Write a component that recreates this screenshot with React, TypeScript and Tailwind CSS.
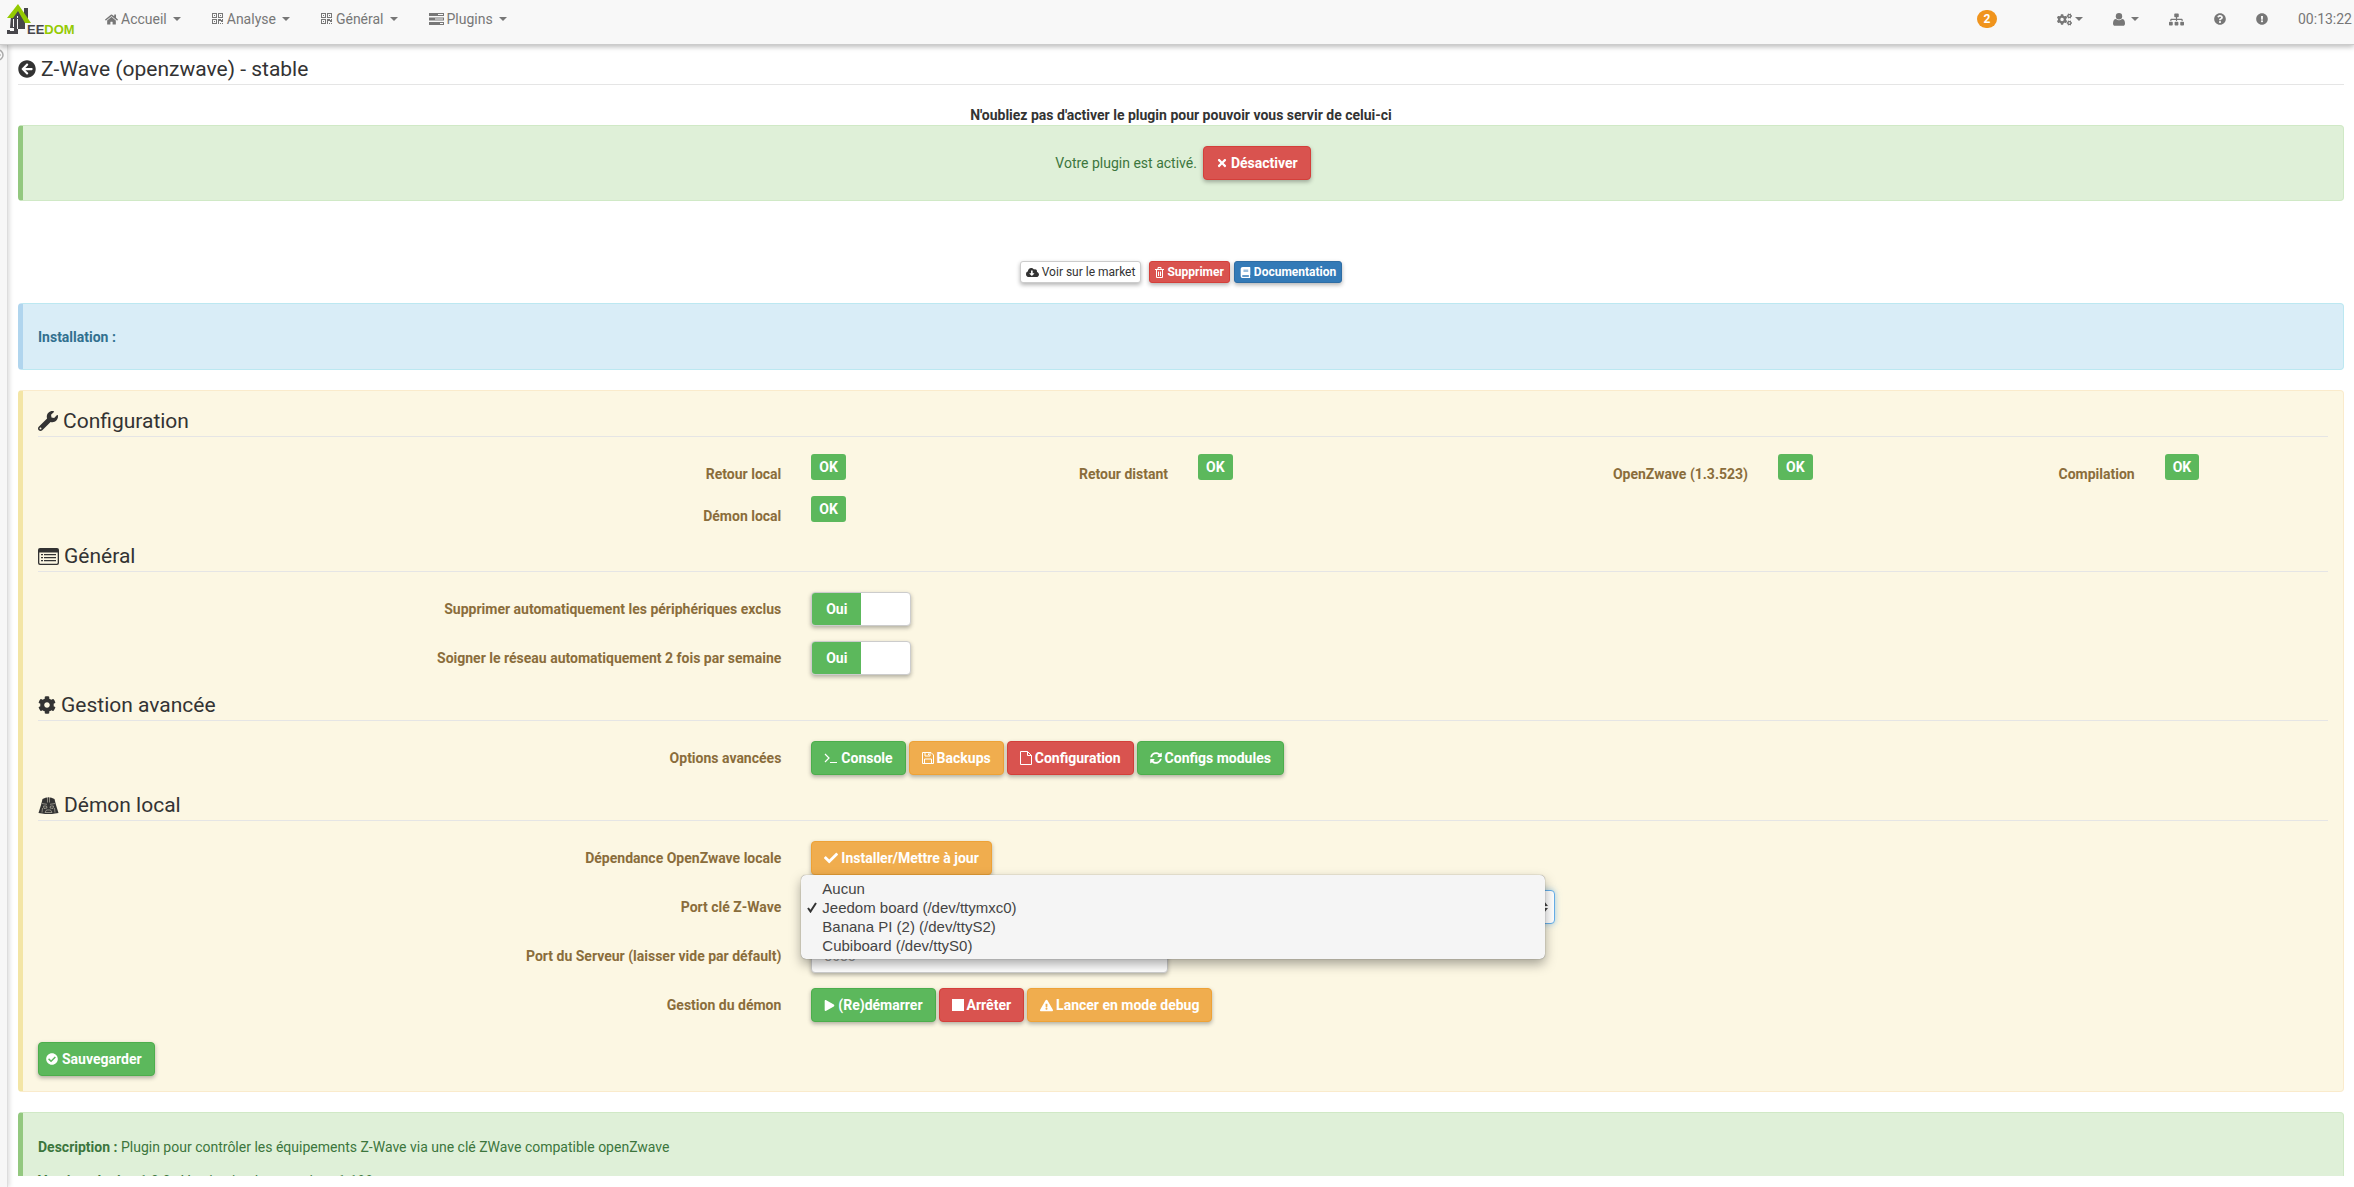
import { useState } from 'react';
import type { ReactNode } from 'react';
import {
  FaArrowCircleLeft,
  FaBook,
  FaCheck,
  FaCheckCircle,
  FaCloudDownloadAlt,
  FaCog,
  FaCogs,
  FaExclamationCircle,
  FaExclamationTriangle,
  FaHome,
  FaPlay,
  FaQuestionCircle,
  FaSitemap,
  FaSquareFull,
  FaSyncAlt,
  FaTimes,
  FaWrench,
} from 'react-icons/fa';

type Tone = 'default' | 'success' | 'warning' | 'danger' | 'primary';
type Size = 'normal' | 'small' | 'save';

const buttonTones: Record<Tone, string> = {
  default: 'bg-white border-[#cccccc] text-[#333333] font-normal',
  success: 'bg-[#5cb85c] border-[#4cae4c] text-white font-bold',
  warning: 'bg-[#f0ad4e] border-[#eea236] text-white font-bold',
  danger: 'bg-[#d9534f] border-[#d43f3a] text-white font-bold',
  primary: 'bg-[#337ab7] border-[#2e6da4] text-white font-bold',
};

const buttonSizes: Record<Size, string> = {
  normal: 'h-[34px] gap-[3px] rounded-[4px] px-3 text-sm',
  small: 'h-[22px] gap-[3px] rounded-[3px] px-[5px] text-xs',
  save: 'h-[34px] gap-1 rounded-[4px] pr-3 pl-[7px] text-sm',
};

const ports = [
  'Aucun',
  'Jeedom board (/dev/ttymxc0)',
  'Banana PI (2) (/dev/ttyS2)',
  'Cubiboard (/dev/ttyS0)',
];

function Logo() {
  return (
    <svg width="70" height="32" viewBox="0 0 70 32" role="img" aria-label="Jeedom">
      <path d="M17 4h4v12h-4z" fill="#47464b" />
      <path d="M4 12l7-6 7 8v11h-7v5H0v-4h3v1h4v-3H3z" fill="#47464b" />
      <path d="M6 15h1v8H6zM10 12h1v2h-1zM10 15h1v10h-1z" fill="#f8f8f8" />
      <path d="M0 14L11 0l13 19h-6L11 7 6 14z" fill="#94ca02" />
      <text x="20" y="30" fontFamily="Liberation Sans, sans-serif" fontSize="13" fontWeight="bold" fill="#47464b">
        EE<tspan fill="#94ca02">DOM</tspan>
      </text>
    </svg>
  );
}

function Caret() {
  return (
    <svg width="8" height="4" viewBox="0 0 8 4" fill="currentColor" aria-hidden="true">
      <path d="M0 0h8L4 4z" />
    </svg>
  );
}

function QrIcon() {
  return (
    <svg width="12" height="12" viewBox="0 0 12 12" fill="currentColor" fillRule="evenodd" aria-hidden="true">
      <path d="M0 0h5v5H0zM1 1v3h3V1zM6 0h5v5H6zM7 1v3h3V1zM0 6h5v5H0zM1 7v3h3V7zM2 2h1v1H2zM8 2h1v1H8zM2 8h1v1H2zM6 6h3v1h1V6h1v3H9V8H7v3H6zM8 10h1v1H8zM10 10h1v1h-1z" />
    </svg>
  );
}

function TasksIcon() {
  return (
    <svg width="15" height="12" viewBox="0 0 15 12" aria-hidden="true">
      <path d="M0 0h15v3H0zM0 4.500h15v3H0zM0 9h15v3H0z" fill="currentColor" />
      <path d="M9 1h5v1H9zM6 5.500h8v1H6zM11 10h3v1h-3z" fill="#f8f8f8" />
    </svg>
  );
}

function UserIcon() {
  return (
    <svg width="12" height="13" viewBox="0 0 12 13" fill="currentColor" aria-hidden="true">
      <circle cx="6" cy="3.300" r="3.200" />
      <path d="M3 6a4.500 4.500 0 0 0 6 0c2 0 3 2 3 4.500 0 1.500-.8 2.300-2 2.300H2c-1.200 0-2-.8-2-2.300C0 8 1 6 3 6z" />
    </svg>
  );
}

function ListIcon() {
  return (
    <svg width="21" height="17" viewBox="0 0 21 17" aria-hidden="true">
      <path
        d="M2 0h17a2 2 0 0 1 2 2v13a2 2 0 0 1-2 2H2a2 2 0 0 1-2-2V2a2 2 0 0 1 2-2zM1.300 4.500V15l.7.700h17l.7-.7V4.500z"
        fill="currentColor"
        fillRule="evenodd"
      />
      <path d="M3 6h2v1.300H3zM6 6h12v1.300H6zM3 9h2v1.300H3zM6 9h12v1.300H6zM3 12h2v1.300H3zM6 12h12v1.300H6z" fill="currentColor" />
    </svg>
  );
}

function HelmetIcon() {
  return (
    <svg width="21" height="17" viewBox="0 0 21 17" aria-hidden="true">
      <path d="M4.500 2Q10.500-1.500 16.500 2L18 8l2.500 8-3.500.5-3 .5H7l-3-.5-3.500-.5L3 8z" fill="currentColor" />
      <path
        d="M9.500 0v5.500M11.500 0v5.500M4 6.500l5 .8M17 6.500l-5 .8M5.500 9h3l.5 2-3 .5zM15.500 9h-3l-.5 2 3 .5zM8.500 13h4l1.500 2.500H7zM4.500 11l-.5 4.500M16.500 11l.5 4.500"
        fill="none"
        stroke="#fcf7e3"
        strokeWidth=".45"
      />
    </svg>
  );
}

function TerminalIcon() {
  return (
    <svg width="14" height="14" viewBox="0 0 14 14" fill="none" stroke="currentColor" aria-hidden="true">
      <path d="M1 3l4 4-4 4M6 11.500h7" strokeWidth="1.200" />
    </svg>
  );
}

function FloppyIcon() {
  return (
    <svg width="12" height="12" viewBox="0 0 12 12" fill="none" stroke="currentColor" aria-hidden="true">
      <path d="M.5.500h8.500l2.500 2.500v8.500H.5zM3 .5v3.500h5V.5M2.500 11.500V7h7v4.500M6.500 1.500v1.500" />
    </svg>
  );
}

function FileIcon() {
  return (
    <svg width="12" height="14" viewBox="0 0 12 14" fill="none" stroke="currentColor" aria-hidden="true">
      <path d="M.5.500h7L11.500 4.500v9H.5zM7.500.500v4h4" />
    </svg>
  );
}

function TrashIcon() {
  return (
    <svg width="9" height="11" viewBox="0 0 9 11" fill="none" stroke="currentColor" aria-hidden="true">
      <path d="M0 2.500h9M3 2V.5h3V2M1.500 3v7.500h6V3M3.500 4.500v4.500M5.500 4.500v4.500" />
    </svg>
  );
}

interface ButtonProps {
  tone: Tone;
  size?: Size;
  icon: ReactNode;
  children: ReactNode;
}

function Button({ tone, size = 'normal', icon, children }: ButtonProps) {
  return (
    <button
      type="button"
      className={`inline-flex items-center border whitespace-nowrap shadow-[0_2px_4px_rgba(0,0,0,0.3)] ${buttonSizes[size]} ${buttonTones[tone]}`}
    >
      {icon}
      {children}
    </button>
  );
}

function Legend({ icon, children }: { icon: ReactNode; children: ReactNode }) {
  return (
    <h2 className="flex h-[31px] items-center gap-[5px] border-b border-[#e5e5e5] text-[21px] leading-[30px] text-[#333333]">
      {icon}
      {children}
    </h2>
  );
}

function Status({ label, span }: { label: string; span: string }) {
  return (
    <>
      <div className={`${span} px-[15px] pt-[10px] text-right font-bold whitespace-nowrap`}>{label}</div>
      <div className="col-span-1 px-[15px]">
        <span className="inline-flex h-[26px] items-center rounded-[3px] bg-[#5cb85c] px-2 align-top font-bold text-white">
          OK
        </span>
      </div>
    </>
  );
}

interface RowProps {
  label: string;
  htmlFor?: string;
  span?: string;
  children: ReactNode;
}

function Row({ label, htmlFor, span = 'col-span-8', children }: RowProps) {
  return (
    <div className="-mx-[15px] grid grid-cols-12">
      <div className="col-span-4 px-[15px] pt-[7px] text-right font-bold">
        {htmlFor ? <label htmlFor={htmlFor}>{label}</label> : label}
      </div>
      <div className={`${span} relative flex h-[34px] gap-[3px] px-[15px]`}>{children}</div>
    </div>
  );
}

function Toggle({ id }: { id: string }) {
  const [checked, setChecked] = useState(true);

  return (
    <label className="flex h-[34px] w-[100px] overflow-hidden rounded-[4px] border border-[#cccccc] bg-white font-bold text-white shadow-[0_2px_4px_rgba(0,0,0,0.3)]">
      <input
        id={id}
        type="checkbox"
        className="sr-only"
        checked={checked}
        onChange={(e) => setChecked(e.target.checked)}
      />
      {checked ? (
        <span className="flex w-1/2 items-center justify-center bg-[#5cb85c]">Oui</span>
      ) : (
        <span className="ml-auto flex w-1/2 items-center justify-center bg-[#d9534f]">Non</span>
      )}
    </label>
  );
}

function NavItem({ icon, children }: { icon: ReactNode; children: ReactNode }) {
  return (
    <a href="#" className="flex items-center gap-[3px]">
      {icon}
      {children}
      <span className="ml-[3px]">
        <Caret />
      </span>
    </a>
  );
}

export default function App() {
  const [port, setPort] = useState(ports[1]);

  return (
    <div className="flex h-screen flex-col overflow-hidden bg-white font-[Roboto,sans-serif] text-sm leading-5 text-[#333333]">
      <header className="z-10 flex h-[45px] shrink-0 items-start border-b border-[#cccccc] bg-[#f8f8f8] pl-[7px] text-[#777777] shadow-[0_2px_5px_rgba(0,0,0,0.26)]">
        <a href="#" className="mt-1 mr-7">
          <Logo />
        </a>
        <nav className="flex h-[38px] items-center gap-[31px]">
          <NavItem icon={<FaHome size={13} />}>Accueil</NavItem>
          <NavItem icon={<QrIcon />}>Analyse</NavItem>
          <NavItem icon={<QrIcon />}>Général</NavItem>
          <NavItem icon={<TasksIcon />}>Plugins</NavItem>
        </nav>
        <div className="ml-auto flex h-[38px] items-center gap-[30px] pr-[2px]">
          <span className="mr-[30px] flex h-[18px] w-5 items-center justify-center rounded-full bg-[#f0941d] text-xs font-bold text-white">
            2
          </span>
          <a href="#" aria-label="Réglages" className="flex items-center gap-[3px]">
            <FaCogs size={15} />
            <Caret />
          </a>
          <a href="#" aria-label="Profil" className="flex items-center gap-[6px]">
            <UserIcon />
            <Caret />
          </a>
          <a href="#" aria-label="Réseau">
            <FaSitemap size={15} />
          </a>
          <a href="#" aria-label="Aide">
            <FaQuestionCircle size={12} />
          </a>
          <a href="#" aria-label="Signaler">
            <FaExclamationCircle size={12} />
          </a>
          <span>00:13:22</span>
        </div>
      </header>

      <div className="flex min-h-0 flex-1">
        <aside className="w-2 shrink-0 overflow-hidden border-r border-[#dddddd] bg-[#f7f7f7] pt-1 shadow-[2px_0_4px_rgba(0,0,0,0.12)]">
          <svg width="4" height="12" viewBox="8 0 4 12" fill="none" stroke="#aaaaaa" aria-hidden="true">
            <circle cx="6" cy="6" r="5" strokeWidth="1.500" />
            <circle cx="8" cy="6" r=".5" />
          </svg>
        </aside>

        <main className="mb-[11px] min-w-0 flex-1 overflow-hidden px-[10px] pt-[9px]">
          <Legend icon={<FaArrowCircleLeft size={18} />}>Z-Wave (openzwave) - stable</Legend>

          <p className="mt-5 text-center font-bold">
            N'oubliez pas d'activer le plugin pour pouvoir vous servir de celui-ci
          </p>
          <section className="flex h-[76px] items-center justify-center gap-[6px] rounded-[4px] border border-l-[5px] border-[#d0e9c6] border-l-[#93c87f] bg-[#dff0d8] text-[#3c763d]">
            Votre plugin est activé.
            <Button tone="danger" icon={<FaTimes size={12} />}>
              Désactiver
            </Button>
          </section>

          <div className="mt-[60px] flex justify-center gap-1">
            <span className="mr-1 flex">
              <Button size="small" tone="default" icon={<FaCloudDownloadAlt size={13} />}>
                Voir sur le market
              </Button>
            </span>
            <Button size="small" tone="danger" icon={<TrashIcon />}>
              Supprimer
            </Button>
            <Button size="small" tone="primary" icon={<FaBook size={11} />}>
              Documentation
            </Button>
          </div>

          <section className="mt-5 flex h-[67px] items-center rounded-[4px] border border-l-[5px] border-[#bce8f1] border-l-[#b0d5ee] bg-[#d9edf7] px-[15px] font-bold text-[#31708f]">
            Installation :
          </section>

          <form
            className="mt-5 rounded-[4px] border border-l-[5px] border-[#faebcc] border-l-[#f3e5a5] bg-[#fcf7e3] p-[15px] text-[#8a6d3b]"
            onSubmit={(e) => e.preventDefault()}
          >
            <div className="flex flex-col gap-[15px]">
              <div>
                <Legend icon={<FaWrench size={20} />}>Configuration</Legend>
                <div className="-mx-[15px] grid grid-cols-12 gap-y-3 pt-[17px]">
                  <Status label="Retour local" span="col-span-4" />
                  <Status label="Retour distant" span="col-span-1" />
                  <Status label="OpenZwave (1.3.523)" span="col-span-2" />
                  <Status label="Compilation" span="col-span-1" />
                  <Status label="Démon local" span="col-span-4" />
                </div>
              </div>

              <div>
                <Legend icon={<ListIcon />}>Général</Legend>
                <div className="flex flex-col gap-[15px] pt-5">
                  <Row label="Supprimer automatiquement les périphériques exclus" htmlFor="autoRemove">
                    <Toggle id="autoRemove" />
                  </Row>
                  <Row label="Soigner le réseau automatiquement 2 fois par semaine" htmlFor="autoHeal">
                    <Toggle id="autoHeal" />
                  </Row>
                </div>
              </div>

              <div>
                <Legend icon={<FaCog size={18} />}>Gestion avancée</Legend>
                <div className="pt-5">
                  <Row label="Options avancées">
                    <Button tone="success" icon={<TerminalIcon />}>
                      Console
                    </Button>
                    <Button tone="warning" icon={<FloppyIcon />}>
                      Backups
                    </Button>
                    <Button tone="danger" icon={<FileIcon />}>
                      Configuration
                    </Button>
                    <Button tone="success" icon={<FaSyncAlt size={12} />}>
                      Configs modules
                    </Button>
                  </Row>
                </div>
              </div>

              <div>
                <Legend icon={<HelmetIcon />}>Démon local</Legend>
                <div className="flex flex-col gap-[15px] pt-5">
                  <Row label="Dépendance OpenZwave locale">
                    <Button tone="warning" icon={<FaCheck size={14} />}>
                      Installer/Mettre à jour
                    </Button>
                  </Row>
                  <Row label="Port clé Z-Wave" htmlFor="port" span="col-span-4">
                    <select
                      id="port"
                      value={port}
                      onChange={(e) => setPort(e.target.value)}
                      className="h-[34px] w-full appearance-none rounded-[4px] border border-[#66afe9] bg-white px-3 text-[#555555] shadow-[0_0_6px_rgba(102,175,233,0.6)] outline-none"
                    >
                      {ports.map((name) => (
                        <option key={name}>{name}</option>
                      ))}
                    </select>
                    <svg
                      className="absolute top-[11px] right-[22px]"
                      width="8"
                      height="12"
                      viewBox="0 0 8 12"
                      fill="#444444"
                      aria-hidden="true"
                    >
                      <path d="M0 5h8L4 0zM0 7h8l-4 5z" />
                    </svg>
                    <ul
                      role="listbox"
                      aria-label="Port clé Z-Wave"
                      className="absolute -top-[15px] right-[25px] left-[5px] z-10 rounded-[5px] bg-[#f5f5f5] py-1 font-['Liberation_Sans',sans-serif] text-[15px] leading-[19px] text-[#444444] shadow-[0_0_1px_rgba(0,0,0,0.6),0_5px_12px_rgba(0,0,0,0.35)]"
                    >
                      {ports.map((name) => (
                        <li
                          key={name}
                          role="option"
                          aria-selected={name === port}
                          onClick={() => setPort(name)}
                          className="flex items-center"
                        >
                          <span className="flex w-[21px] justify-center">
                            {name === port && (
                              <svg width="10" height="11" viewBox="0 0 10 11" fill="none" stroke="#333333" aria-hidden="true">
                                <path d="M1 6l2.500 3.500L9 1" strokeWidth="2" />
                              </svg>
                            )}
                          </span>
                          {name}
                        </li>
                      ))}
                    </ul>
                  </Row>
                  <Row label="Port du Serveur (laisser vide par défault)" htmlFor="serverPort" span="col-span-2">
                    <input
                      id="serverPort"
                      type="text"
                      placeholder="8083"
                      className="h-[34px] w-full rounded-[4px] border border-[#cccccc] bg-white px-3 text-[#555555] shadow-[0_2px_4px_rgba(0,0,0,0.3)] placeholder:text-[#999999]"
                    />
                  </Row>
                  <Row label="Gestion du démon">
                    <Button tone="success" icon={<FaPlay size={11} />}>
                      (Re)démarrer
                    </Button>
                    <Button tone="danger" icon={<FaSquareFull size={12} />}>
                      Arrêter
                    </Button>
                    <Button tone="warning" icon={<FaExclamationTriangle size={13} />}>
                      Lancer en mode debug
                    </Button>
                  </Row>
                </div>
              </div>
            </div>

            <div className="mt-5 flex">
              <Button size="save" tone="success" icon={<FaCheckCircle size={12} />}>
                Sauvegarder
              </Button>
            </div>
          </form>

          <section className="mt-5 rounded-[4px] border border-l-[5px] border-[#d0e9c6] border-l-[#93c87f] bg-[#dff0d8] px-[15px] py-6 text-[#3c763d]">
            <p>
              <strong>Description :</strong> Plugin pour contrôler les équipements Z-Wave via une clé ZWave compatible
              openZwave
            </p>
            <p className="mt-[14px]">
              <strong>Version plugin :</strong> 1.0.0 - Version jeedom requise : 1.188
            </p>
          </section>
        </main>
      </div>
    </div>
  );
}
